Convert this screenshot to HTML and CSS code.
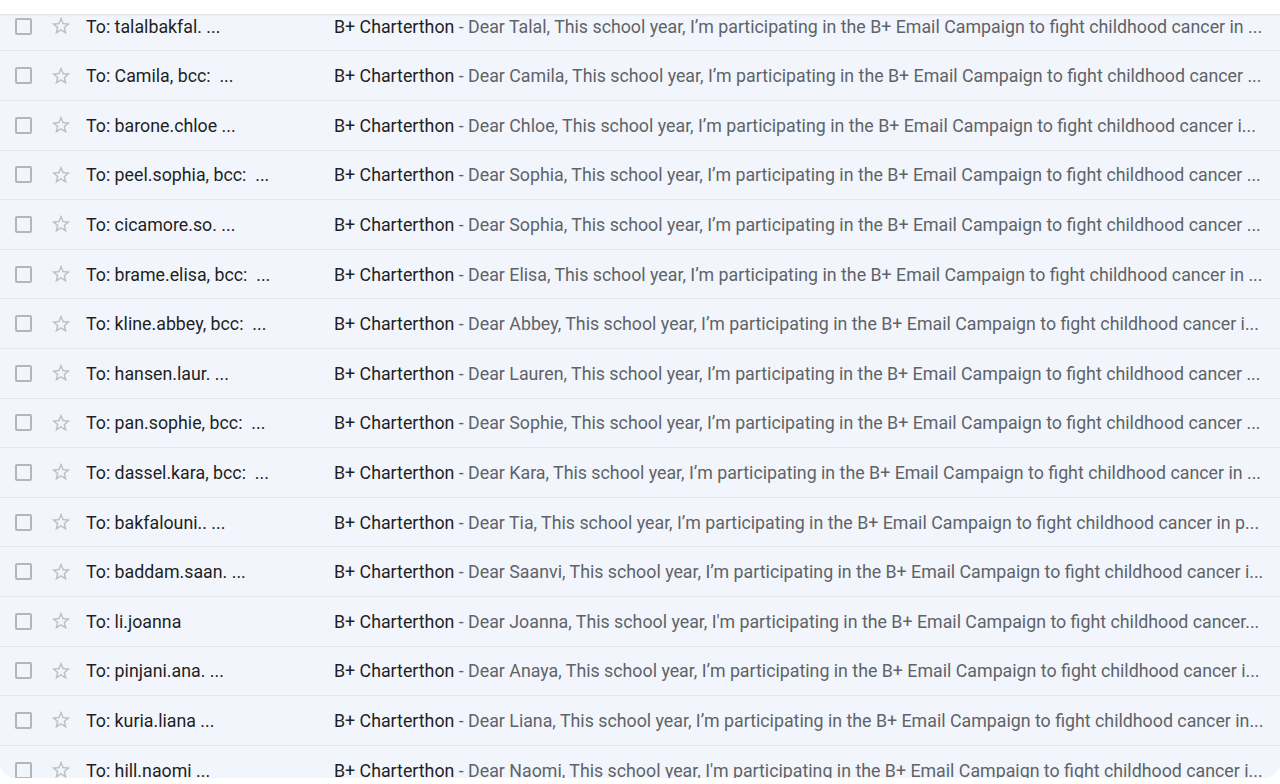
FILE: index.html
```html
<!DOCTYPE html>
<html lang="en">
<head>
<meta charset="utf-8">
<title>Sent</title>
<link rel="stylesheet" href="styles.css">
</head>
<body>
<div class="topbar"></div>
<div class="viewport">
  <ul class="list" id="list"></ul>
</div>
<script>
const rows = [
 ["To: talalbakfal. ...", "Dear Talal, This school year, I’m participating in the B+ Email Campaign to fight childhood cancer in ..."],
 ["To: Camila, bcc:\u00a0 ...", "Dear Camila, This school year, I’m participating in the B+ Email Campaign to fight childhood cancer ..."],
 ["To: barone.chloe ...", "Dear Chloe, This school year, I’m participating in the B+ Email Campaign to fight childhood cancer i..."],
 ["To: peel.sophia, bcc:\u00a0 ...", "Dear Sophia, This school year, I’m participating in the B+ Email Campaign to fight childhood cancer ..."],
 ["To: cicamore.so. ...", "Dear Sophia, This school year, I’m participating in the B+ Email Campaign to fight childhood cancer ..."],
 ["To: brame.elisa, bcc:\u00a0 ...", "Dear Elisa, This school year, I’m participating in the B+ Email Campaign to fight childhood cancer in ..."],
 ["To: kline.abbey, bcc:\u00a0 ...", "Dear Abbey, This school year, I’m participating in the B+ Email Campaign to fight childhood cancer i..."],
 ["To: hansen.laur. ...", "Dear Lauren, This school year, I’m participating in the B+ Email Campaign to fight childhood cancer ..."],
 ["To: pan.sophie, bcc:\u00a0 ...", "Dear Sophie, This school year, I’m participating in the B+ Email Campaign to fight childhood cancer ..."],
 ["To: dassel.kara, bcc:\u00a0 ...", "Dear Kara, This school year, I’m participating in the B+ Email Campaign to fight childhood cancer in ..."],
 ["To: bakfalouni.. ...", "Dear Tia, This school year, I’m participating in the B+ Email Campaign to fight childhood cancer in p..."],
 ["To: baddam.saan. ...", "Dear Saanvi, This school year, I’m participating in the B+ Email Campaign to fight childhood cancer i..."],
 ["To: li.joanna", "Dear Joanna, This school year, I'm participating in the B+ Email Campaign to fight childhood cancer..."],
 ["To: pinjani.ana. ...", "Dear Anaya, This school year, I’m participating in the B+ Email Campaign to fight childhood cancer i..."],
 ["To: kuria.liana ...", "Dear Liana, This school year, I’m participating in the B+ Email Campaign to fight childhood cancer in..."],
 ["To: hill.naomi ...", "Dear Naomi, This school year, I'm participating in the B+ Email Campaign to fight childhood cancer i..."]
];
const star = '<svg class="star" viewBox="0 0 24 24" width="22" height="22"><path d="M22 9.24l-7.19-.62L12 2 9.19 8.63 2 9.24l5.46 4.73L5.82 21 12 17.27 18.18 21l-1.63-7.03L22 9.24zM12 15.4l-3.76 2.27 1-4.28-3.32-2.88 4.38-.38L12 6.1l1.71 4.04 4.38.38-3.32 2.88 1 4.28L12 15.4z"/></svg>';
const list = document.getElementById('list');
for (const [to, snip] of rows) {
  const li = document.createElement('li');
  li.className = 'row';
  li.innerHTML = '<span class="cb"></span>' + star +
    '<span class="sender"></span><span class="line"><span class="subject">B+ Charterthon</span><span class="snippet"></span></span>';
  li.querySelector('.sender').textContent = to;
  li.querySelector('.snippet').textContent = ' - ' + snip;
  list.appendChild(li);
}
</script>
</body>
</html>
```

FILE: styles.css
```css
* { box-sizing: border-box; }
html, body {
  margin: 0;
  padding: 0;
  background: #ffffff;
  font-family: Roboto, "Liberation Sans", Arial, sans-serif;
}
.topbar {
  position: relative;
  z-index: 1;
  height: 14px;
  background: #ffffff;
  box-shadow: 0 1px 2px rgba(60, 64, 67, 0.12);
}
.viewport {
  height: 764px;
  overflow: hidden;
  background: #f2f6fc;
  border-radius: 0 0 16px 16px;
}
.list {
  list-style: none;
  margin: -12.2px 0 0 0;
  padding: 0;
}
.row {
  display: flex;
  align-items: center;
  height: 49.6px;
  padding: 0 14px 0 15px;
  background: #f2f6fc;
  border-bottom: 1px solid #e2e7ee;
  font-size: 17.8px;
  white-space: nowrap;
}
.cb {
  flex: none;
  width: 17px;
  height: 17px;
  border: 2px solid #b4b7ba;
  border-radius: 2px;
  margin-right: 18px;
}
.star {
  flex: none;
  fill: #bdc0c3;
  margin-right: 14px;
}
.sender {
  flex: none;
  width: 248px;
  color: #1f1f1f;
  overflow: hidden;
}
.line {
  flex: 1;
  min-width: 0;
  overflow: hidden;
  text-overflow: ellipsis;
}
.subject { color: #1f1f1f; }
.snippet { color: #5f6368; }
```
